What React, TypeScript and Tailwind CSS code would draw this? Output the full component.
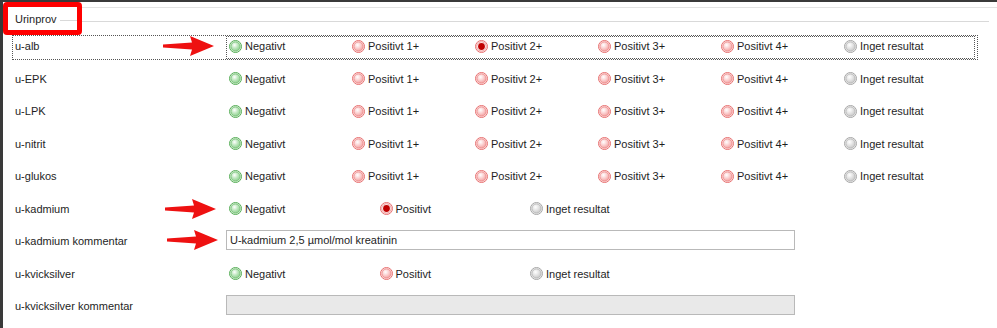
import React from "react";

type Kind = "green" | "red" | "gray";

function Radio({ kind, checked }: { kind: Kind; checked?: boolean }) {
  const c =
    kind === "green"
      ? { stroke: "#55ad55", edge: "#86cc86", mid: "#c2e8c2", ring: "#6cbc6c" }
      : kind === "red"
      ? { stroke: "#e76f6f", edge: "#f29a9a", mid: "#fbd3d3", ring: "#ec8585" }
      : { stroke: "#a6a6a6", edge: "#c4c4c4", mid: "#e6e6e6", ring: "#b2b2b2" };
  const id = `g-${kind}-${checked ? 1 : 0}`;
  return (
    <svg width="13" height="13" viewBox="0 0 13 13" className="shrink-0">
      <defs>
        <radialGradient id={id} cx="0.4" cy="0.35" r="0.7">
          <stop offset="0" stopColor="#ffffff" />
          <stop offset="0.45" stopColor={c.mid} />
          <stop offset="1" stopColor={c.edge} />
        </radialGradient>
      </defs>
      <circle cx="6.5" cy="6.5" r="6" fill="#fff" stroke={c.stroke} strokeWidth="1" />
      <circle cx="6.5" cy="6.5" r="4.7" fill={`url(#${id})`} stroke={c.ring} strokeWidth="0.9" />
      {checked && (
        <>
          <circle cx="6.5" cy="6.5" r="4.1" fill="#fff" />
          <circle cx="6.5" cy="6.5" r="3.4" fill="#c00000" />
        </>
      )}
    </svg>
  );
}

function Opt({ kind, label, checked, w }: { kind: Kind; label: string; checked?: boolean; w: string }) {
  return (
    <div className={`flex items-center gap-[3px] ${w}`}>
      <Radio kind={kind} checked={checked} />
      <span>{label}</span>
    </div>
  );
}

function Arrow({ x, y }: { x: number; y: number }) {
  return (
    <svg
      width="52"
      height="22"
      viewBox="0 0 52 22"
      className="absolute"
      style={{ left: x, top: y }}
    >
      <path
        d="M0 9.5 L29 7.5 L27 1 L51 11 L27 21 L29 14.5 L0 12.5 Z"
        fill="#ee1111"
      />
    </svg>
  );
}

const six: { kind: Kind; label: string }[] = [
  { kind: "green", label: "Negativt" },
  { kind: "red", label: "Positivt 1+" },
  { kind: "red", label: "Positivt 2+" },
  { kind: "red", label: "Positivt 3+" },
  { kind: "red", label: "Positivt 4+" },
  { kind: "gray", label: "Inget resultat" },
];

const three: { kind: Kind; label: string }[] = [
  { kind: "green", label: "Negativt" },
  { kind: "red", label: "Positivt" },
  { kind: "gray", label: "Inget resultat" },
];

function Row({ label, children }: { label: string; children: React.ReactNode }) {
  return (
    <div className="flex items-center h-[32.5px]">
      <div className="w-[214px] shrink-0">{label}</div>
      {children}
    </div>
  );
}

export default function App() {
  return (
    <div
      className="relative w-[997px] h-[328px] bg-white overflow-hidden border-t-[2px] border-l-[3px] border-[#3a3a3a] text-[11px] text-[#1e1e1e] [font-variant-ligatures:none]"
      style={{ fontFamily: '"Liberation Sans", Arial, sans-serif' }}
    >
      <div className="h-[5px]" />
      <div className="h-px bg-[#e3e3e3]" />
      <div className="h-[13px]" />
      <div className="flex items-center h-px">
        <div className="w-[67px]" />
        <div className="flex-1 h-px bg-[#d9d9d9] mr-[8px]" />
      </div>
      <div className="h-[8px]" />

      <div className="pl-[12px]">
        <Row label="u-alb">
          <div className="flex">
            {six.map((o, i) => (
              <Opt key={i} kind={o.kind} label={o.label} checked={i === 2} w="w-[123px]" />
            ))}
          </div>
        </Row>
        {["u-EPK", "u-LPK", "u-nitrit", "u-glukos"].map((l) => (
          <Row key={l} label={l}>
            <div className="flex">
              {six.map((o, i) => (
                <Opt key={i} kind={o.kind} label={o.label} w="w-[123px]" />
              ))}
            </div>
          </Row>
        ))}
        <Row label="u-kadmium">
          <div className="flex">
            {three.map((o, i) => (
              <Opt key={i} kind={o.kind} label={o.label} checked={i === 1} w="w-[150.5px]" />
            ))}
          </div>
        </Row>
        <Row label="u-kadmium kommentar">
          <div className="-ml-[3px] w-[569px] h-[20px] border border-[#b9b9b9] bg-white flex items-center px-[3px] -mt-[3px]">
            U-kadmium 2,5 µmol/mol kreatinin
          </div>
        </Row>
        <Row label="u-kvicksilver">
          <div className="flex">
            {three.map((o, i) => (
              <Opt key={i} kind={o.kind} label={o.label} w="w-[150.5px]" />
            ))}
          </div>
        </Row>
        <Row label="u-kvicksilver kommentar">
          <div className="-ml-[3px] w-[569px] h-[20px] border border-[#b9b9b9] bg-[#e9e9e9] -mt-[3px]" />
        </Row>
      </div>

      {/* focus rectangles */}
      <div className="absolute left-[9px] top-[33px] w-[966px] h-[25px] border border-dotted border-[#555]" />
      <div className="absolute left-[223px] top-[34px] w-[749px] h-[23px] border border-dotted border-[#555]" />

      {/* red highlight box */}
      <div className="absolute left-0 top-0 w-[79px] h-[33px] border-[5px] border-[#ff0000] rounded-[4px] bg-white flex items-center">
        <div className="pl-[7px] pt-[2px] flex items-center w-full">
          <span>Urinprov</span>
          <div className="flex-1 h-px bg-[#d9d9d9] ml-[3px] mt-[2px]" />
        </div>
      </div>

      <Arrow x={160} y={33} />
      <Arrow x={162} y={196} />
      <Arrow x={164} y={227} />
    </div>
  );
}
